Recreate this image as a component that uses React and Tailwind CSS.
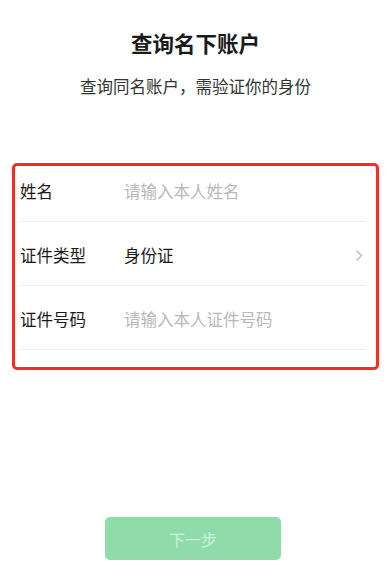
import React from 'react';

const font = { fontFamily: '"Noto Sans CJK SC", "Noto Sans", sans-serif' };

function Row({ label, children }) {
    return (
        <div className="flex items-center h-[54px] pb-[6px] border-b border-[#ececec]">
            <span className="w-[104px] shrink-0 text-[16.5px] text-[#1a1a1a]">{label}</span>
            <div className="flex-1 flex items-center text-[16.5px]">{children}</div>
        </div>
    );
}

export default function App() {
    return (
        <div className="min-h-[585px] bg-white" style={font}>
            <h1 className="pt-[28px] text-center text-[21.5px] leading-[30px] font-bold text-[#1a1a1a]">
                查询名下账户
            </h1>
            <p className="mt-[16px] text-center text-[16.5px] leading-[24px] text-[#333]">
                查询同名账户，需验证你的身份
            </p>

            {/* 表单区域 */}
            <div className="mt-[65px] mx-[12px] border-[3px] border-[#ff2a1f] rounded-[5px] pt-[2px] pl-[5px] pr-[10px] pb-[17px] flex flex-col gap-[10px]">
                <Row label="姓名">
                    <span className="text-[#b8b8b8]">请输入本人姓名</span>
                </Row>
                <Row label="证件类型">
                    <span className="flex-1 text-[#1a1a1a]">身份证</span>
                    <svg width="8" height="13" viewBox="0 0 8 13" className="mr-[3px]">
                        <path d="M1.5 1.5 L6.5 6.5 L1.5 11.5" fill="none" stroke="#c4c4c4" strokeWidth="1.6" />
                    </svg>
                </Row>
                <Row label="证件号码">
                    <span className="text-[#b8b8b8]">请输入本人证件号码</span>
                </Row>
            </div>

            <button
                type="button"
                disabled
                className="mt-[147px] ml-[105px] w-[176px] h-[43px] rounded-[5px] bg-[#8fdcaa] text-[16px] text-[#cdf2d9]"
            >
                下一步
            </button>
        </div>
    );
}
